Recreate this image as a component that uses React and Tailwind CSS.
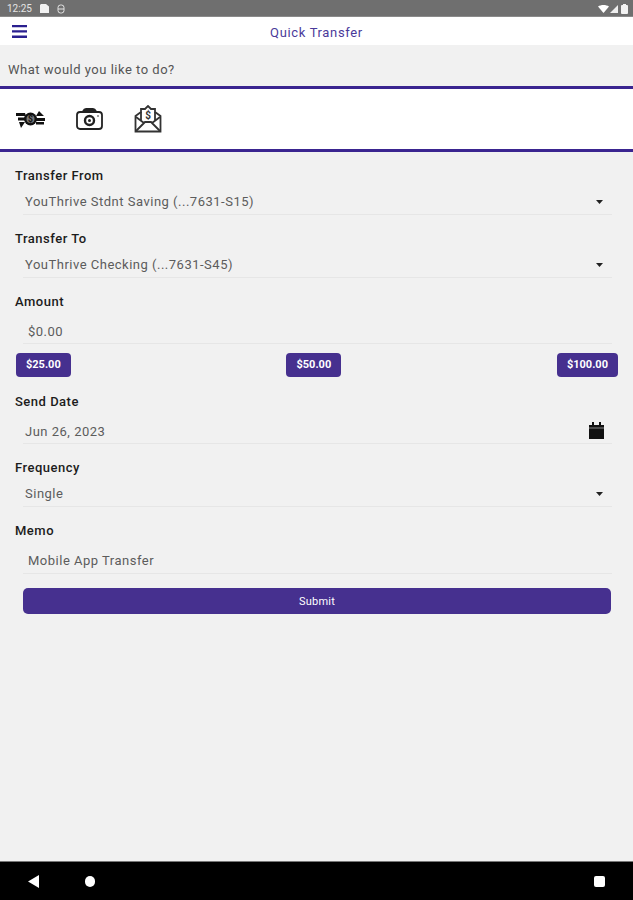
const PURPLE = "#46308f";

function Caret() {
  return (
    <svg width="7" height="4" viewBox="0 0 7 4" className="mr-[9px]">
      <path d="M0 0h7L3.5 4z" fill="#222" />
    </svg>
  );
}

function Field({ label, value, caret, right, textClass = "pl-[2px]", rowClass = "h-[28px] pt-[3px]" }) {
  return (
    <div>
      <div className="h-[22px] pl-[15px] flex items-center text-[13px] font-medium text-[#1c1c1c] tracking-[0.5px]">{label}</div>
      <div className={`${rowClass} ml-[23px] mr-[21px] flex items-center justify-between border-b border-[#e6e6e6]`}>
        <span className={`${textClass} text-[13px] text-[#5c5c5c] tracking-[0.5px]`}>{value}</span>
        {caret && <Caret />}
        {right}
      </div>
    </div>
  );
}

function AmountButton({ children }) {
  return (
    <button className="px-[10px] h-[24px] rounded-[4px] bg-[#46308f] text-white text-[11px] font-bold flex items-center justify-center">
      {children}
    </button>
  );
}

export default function App() {
  return (
    <div className="w-[633px] h-[900px] flex flex-col bg-[#f1f1f1] font-['Roboto',sans-serif] overflow-hidden">
      {/* status bar */}
      <div className="h-[17px] pt-[1px] bg-[#6f6f6f] border-b border-[#8a8a8a] flex items-center justify-between px-[7px] text-white">
        <div className="flex items-center">
          <span className="text-[10px] text-[#e4e4e4] w-[33px]">12:25</span>
          <svg width="9" height="9" viewBox="0 0 9 9"><path d="M1 0h5L9 2.500V9H0V1z" fill="#f2f2f2" /></svg>
          <svg width="8" height="10" viewBox="0 0 8 10" fill="none" stroke="#e4e4e4" strokeWidth="1" className="ml-[8px]"><rect x="1" y="1" width="6" height="8" rx="2.500" /><path d="M1 5h6" /></svg>
        </div>
        <div className="flex items-center gap-[1px] mr-[-2px]">
          <svg width="11" height="8" viewBox="0 0 11 8"><path d="M0 1.500C3-.5 8-.5 11 1.500L5.500 8z" fill="#fff" /></svg>
          <svg width="8" height="8" viewBox="0 0 8 8"><path d="M8 0v8H0z" fill="#eee" /></svg>
          <svg width="7" height="10" viewBox="0 0 7 10" className="ml-[2px]"><rect y="1" width="7" height="9" rx="1" fill="#f2f2f2" /><rect x="2" width="3" height="2" fill="#f2f2f2" /></svg>
        </div>
      </div>

      {/* header */}
      <div className="h-[28px] bg-white flex items-center justify-center relative">
        <svg width="15" height="13" viewBox="0 0 15 13" className="absolute left-[12px] top-[8px]">
          <path d="M0 0h15v2.300H0zM0 5.300h15v2.300H0zM0 10.600h15v2.300H0z" fill="#2a1f8f" />
        </svg>
        <span className="text-[13px] text-[#4a3a9a] tracking-[0.65px] mt-[4px]">Quick Transfer</span>
      </div>

      <div className="h-[41px] pl-[8px] pt-[9px] flex items-center text-[13px] text-[#555] tracking-[0.5px]">What would you like to do?</div>

      {/* action tabs */}
      <div className="h-[66px] bg-white border-y-[3px] border-[#3a2590] flex items-center pl-[16px]">
        <svg width="29" height="17" viewBox="0 0 29 17">
          <path d="M0 2h9l1 3H0zM2 6.500h7.500V9.500H2zM3 11h6l-4 6z" fill="#111" />
          <circle cx="14.500" cy="8" r="6.500" fill="#111" />
          <circle cx="14.500" cy="8" r="4" fill="#777" />
          <text x="14.500" y="11" textAnchor="middle" fontSize="8.500" fontWeight="700" fill="#111" fontFamily="Roboto">$</text>
          <path d="M20 5l3-5 5 5zM20 7h9v3h-9zM20 11h8v2.500h-8z" fill="#111" />
        </svg>
        <svg width="27" height="22" viewBox="0 0 27 22" fill="none" stroke="#222" strokeWidth="1.800" className="ml-[31px]">
          <rect x="1" y="4" width="25" height="17" rx="3" />
          <path d="M7 3.500C8 1.500 9 1 10 1h7c1 0 2 .5 3 2.500" fill="#222" />
          <circle cx="13.500" cy="12.500" r="4.500" strokeWidth="2.400" />
          <circle cx="13.500" cy="12.500" r="1.500" fill="#222" stroke="none" />
          <circle cx="22" cy="8" r="0.800" fill="#222" stroke="none" />
        </svg>
        <svg width="28" height="28" viewBox="0 0 28 28" fill="none" stroke="#333" strokeWidth="1.800" className="ml-[31px] mt-[-1px]">
          <path d="M1.500 11L7 7V4h4l3-3 3 3h4v3l5.500 4v15.500h-25z" />
          <path d="M7 7v9M21 7v9M2 26l9-9h6l9 9M2 12l8 6M26 12l-8 6" />
          <text x="14" y="14" textAnchor="middle" fontSize="10" fontWeight="700" fill="#333" stroke="none" fontFamily="Roboto">$</text>
        </svg>
      </div>

      {/* form */}
      <div className="flex-1 pt-[13px] flex flex-col gap-[13px]">
        <Field label="Transfer From" value="YouThrive Stdnt Saving (...7631-S15)" caret />
        <Field label="Transfer To" value="YouThrive Checking (...7631-S45)" caret />
        <div>
          <Field label="Amount" value="$0.00" rowClass="h-[31px] pt-[7px]" textClass="pl-[5px]" />
          <div className="flex justify-between pl-[16px] pr-[15px] mt-[9px] mb-[1px]">
            <AmountButton>$25.00</AmountButton>
            <AmountButton>$50.00</AmountButton>
            <AmountButton>$100.00</AmountButton>
          </div>
        </div>
        <Field
          label="Send Date"
          value="Jun 26, 2023"
          rowClass="h-[31px] pt-[7px]"
          right={
            <svg width="15" height="17" viewBox="0 0 15 17" className="mr-[8px] mt-[-2px]">
              <path d="M0 3h15v14H0zM3 0h2v3H3zM10 0h2v3h-2z" fill="#111" />
              <path d="M0 5.500h15v1H0z" fill="#888" />
            </svg>
          }
        />
        <Field label="Frequency" value="Single" caret />
        <div>
          <Field label="Memo" value="Mobile App Transfer" rowClass="h-[32px] pt-[7px]" textClass="pl-[5px]" />
          <div className="mt-[14px] ml-[23px] mr-[22px]">
            <button style={{ backgroundColor: PURPLE }} className="w-full h-[26px] pt-[3px] rounded-[5px] text-white text-[11px] tracking-[0.2px] flex items-center justify-center">
              Submit
            </button>
          </div>
        </div>
      </div>

      {/* nav bar */}
      <div className="h-[39px] bg-black border-t border-[#777] flex items-center relative">
        <svg width="11" height="13" viewBox="0 0 11 13" className="absolute left-[28px] top-[13px]"><path d="M11 0v13L0 6.500z" fill="#fff" /></svg>
        <span className="absolute left-[85px] top-[14px] w-[10px] h-[11px] rounded-full bg-white" />
        <span className="absolute left-[594px] top-[14px] w-[11px] h-[11px] rounded-[2px] bg-white" />
      </div>
    </div>
  );
}
